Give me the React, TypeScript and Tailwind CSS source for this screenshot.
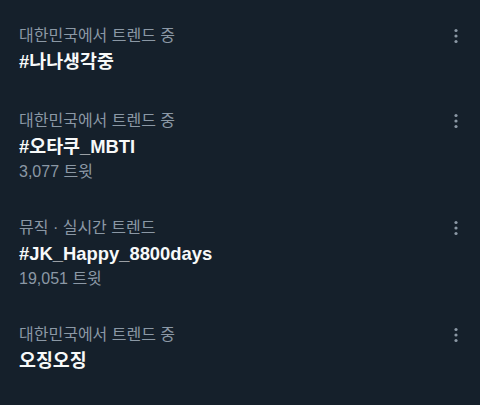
const trends = [
  { category: "대한민국에서 트렌드 중", title: "#나나생각중" },
  { category: "대한민국에서 트렌드 중", title: "#오타쿠_MBTI", count: "3,077 트윗" },
  { category: "뮤직 · 실시간 트렌드", title: "#JK_Happy_8800days", count: "19,051 트윗" },
  { category: "대한민국에서 트렌드 중", title: "오징오징" },
];

function MoreIcon() {
  return (
    <svg viewBox="0 0 20 20" className="h-5 w-5" fill="currentColor">
      <circle cx="10" cy="4.5" r="1.6" />
      <circle cx="10" cy="10" r="1.6" />
      <circle cx="10" cy="15.5" r="1.6" />
    </svg>
  );
}

export default function App() {
  return (
    <div
      className="w-[480px] h-[405px] overflow-hidden bg-[#15202b]"
      style={{ fontFamily: '"Liberation Sans", "Noto Sans CJK KR", sans-serif' }}
    >
      {trends.map((t, i) => (
        <div key={i} className="flex pl-[19px] pr-[14px] pt-[26px] pb-[10px]">
          <div className="flex-1">
            <div className="text-[16px] leading-[20px] text-[#8b98a5]">{t.category}</div>
            <div className="mt-[3px] text-[18.4px] leading-[26px] font-bold text-[#f7f9f9]">{t.title}</div>
            {t.count && (
              <div className="mt-[2px] text-[16px] leading-[20px] text-[#8b98a5]">{t.count}</div>
            )}
          </div>
          <div className="h-5 text-[#8b98a5]">
            <MoreIcon />
          </div>
        </div>
      ))}
    </div>
  );
}
